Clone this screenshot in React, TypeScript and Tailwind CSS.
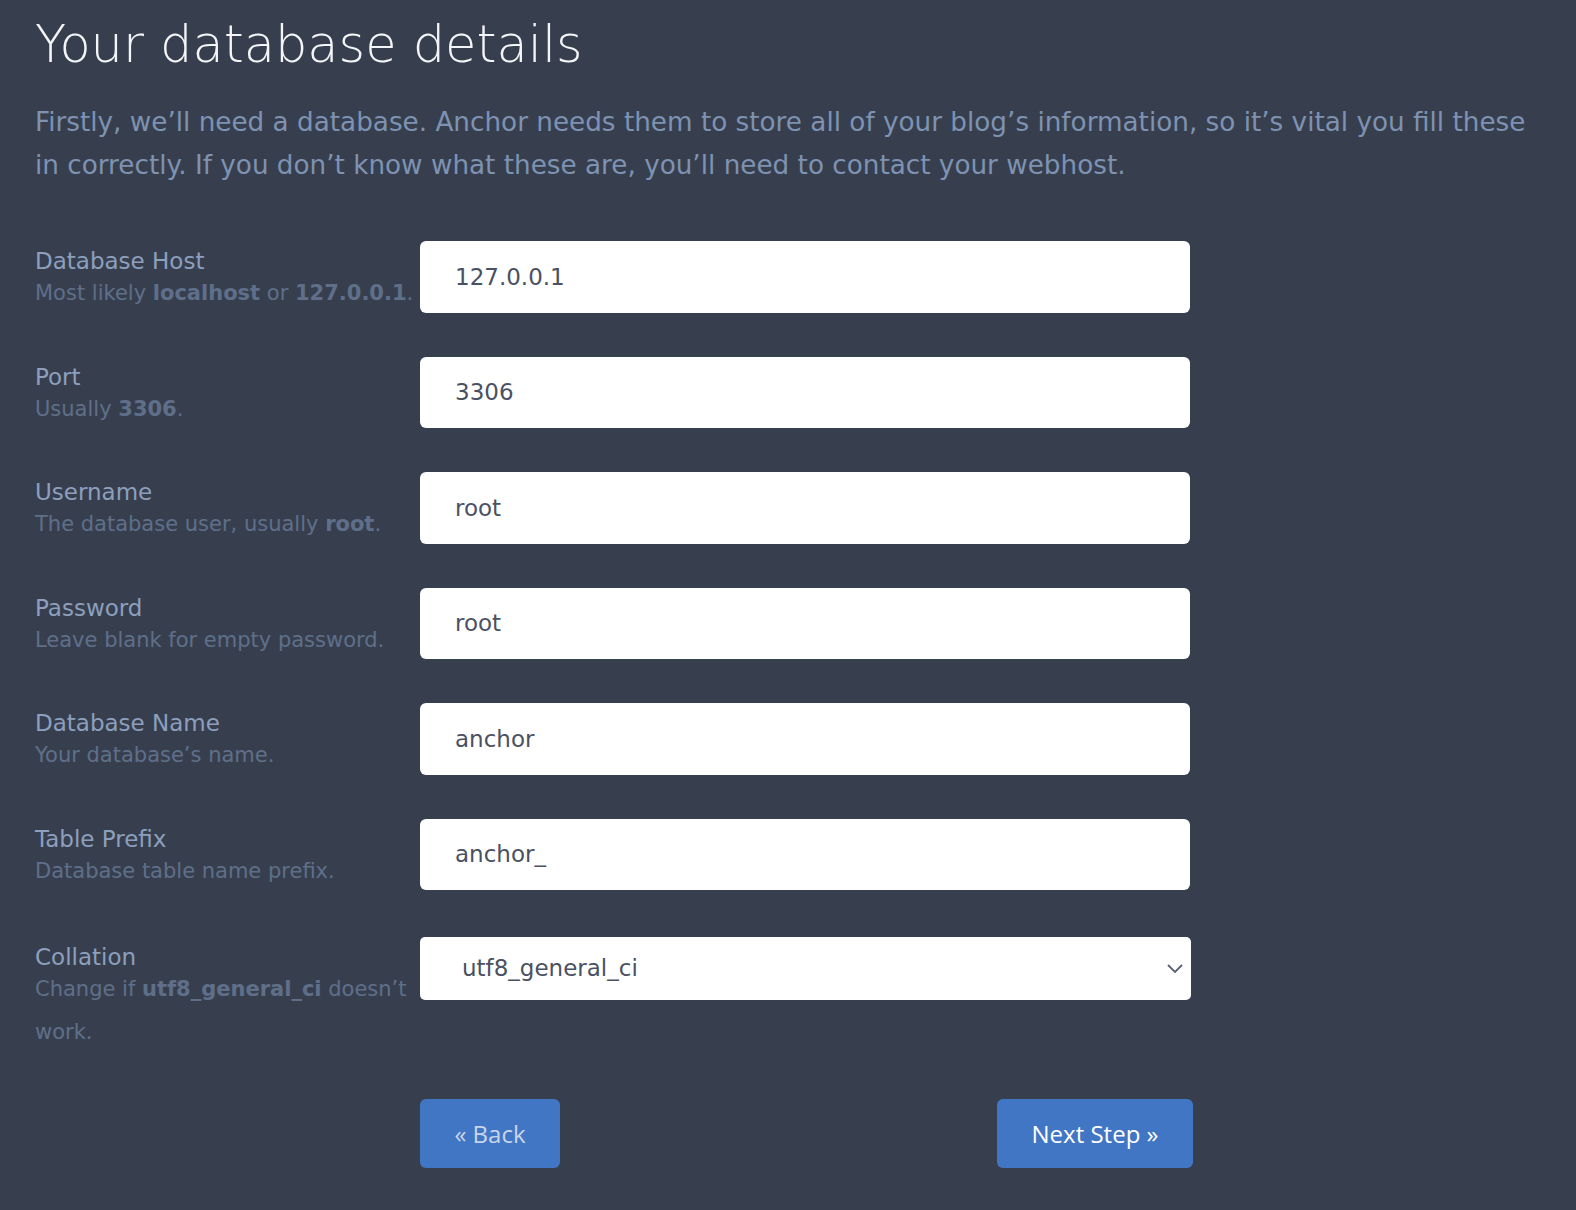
interface Field {
  label: string
  hint: React.ReactNode
  value: string
}

const fields: Field[] = [
  {
    label: "Database Host",
    hint: (
      <>
        Most likely <b>localhost</b> or <b>127.0.0.1</b>.
      </>
    ),
    value: "127.0.0.1",
  },
  { label: "Port", hint: <>Usually <b>3306</b>.</>, value: "3306" },
  {
    label: "Username",
    hint: <>The database user, usually <b>root</b>.</>,
    value: "root",
  },
  { label: "Password", hint: "Leave blank for empty password.", value: "root" },
  { label: "Database Name", hint: "Your database\u2019s name.", value: "anchor" },
  { label: "Table Prefix", hint: "Database table name prefix.", value: "anchor_" },
]

function Label({ label, hint }: { label: string; hint: React.ReactNode }) {
  return (
    <div className="w-[385px] shrink-0 pt-[6px]">
      <div className="text-[23px] leading-[28px] text-[#8d9fbd]">{label}</div>
      <div className="-mt-[3px] text-[21px] leading-[43px] text-[#5f6f89] [&_b]:font-bold">
        {hint}
      </div>
    </div>
  )
}

const font = { fontFamily: '"DejaVu Sans", sans-serif' }

export default function App() {
  return (
    <div className="min-h-[1210px] bg-[#373f4f] px-[35px] pt-[14px]" style={font}>
      <h1 className="text-[51px] leading-[62px] font-extralight text-[#f3f5f8]">
        Your database details
      </h1>
      <p className="mt-[25px] text-[26.25px] leading-[43px] text-[#7e92b2]">
        Firstly, we’ll need a database. Anchor needs them to store all of your blog’s
        information, so it’s vital you fill these in correctly. If you don’t know what
        these are, you’ll need to contact your webhost.
      </p>

      <form className="mt-[54px] flex flex-col gap-[44px]">
        {fields.map((f) => (
          <div key={f.label} className="flex h-[71.5px] items-start">
            <Label label={f.label} hint={f.hint} />
            <input
              readOnly
              value={f.value}
              className="h-[71.5px] w-[770px] rounded-[6px] bg-white px-[35px] text-[23px] text-[#4a5162] outline-none"
              style={font}
            />
          </div>
        ))}

        <div className="mt-[3px] flex items-start">
          <Label
            label="Collation"
            hint={
              <>
                Change if <b>utf8_general_ci</b> doesn’t work.
              </>
            }
          />
          <div className="relative w-[771px]">
            <select
              className="h-[63px] w-full appearance-none rounded-[5px] bg-white pl-[42px] text-[23px] text-[#4a5162] outline-none"
              style={font}
              defaultValue="utf8_general_ci"
            >
              <option>utf8_general_ci</option>
            </select>
            <svg
              className="pointer-events-none absolute right-[8px] top-[27px] text-[#5b6273]"
              width="16"
              height="9"
              viewBox="0 0 16 9"
              fill="none"
              stroke="currentColor"
              strokeWidth="1.8"
            >
              <polyline points="1,1 8,8 15,1" />
            </svg>
          </div>
        </div>

        <div className="mt-[1px] flex w-[1158px] justify-between pl-[385px]">
          <button
            type="button"
            className="h-[69px] w-[140px] rounded-[6px] bg-[#4176c5] text-[24px] text-[#c9d5ea]"
            style={{ fontFamily: '"Open Sans", sans-serif' }}
          >
            « Back
          </button>
          <button
            type="button"
            className="h-[69px] w-[196px] rounded-[6px] bg-[#4176c5] text-[24px] text-white"
            style={{ fontFamily: '"Open Sans", sans-serif' }}
          >
            Next Step »
          </button>
        </div>
      </form>
    </div>
  )
}
